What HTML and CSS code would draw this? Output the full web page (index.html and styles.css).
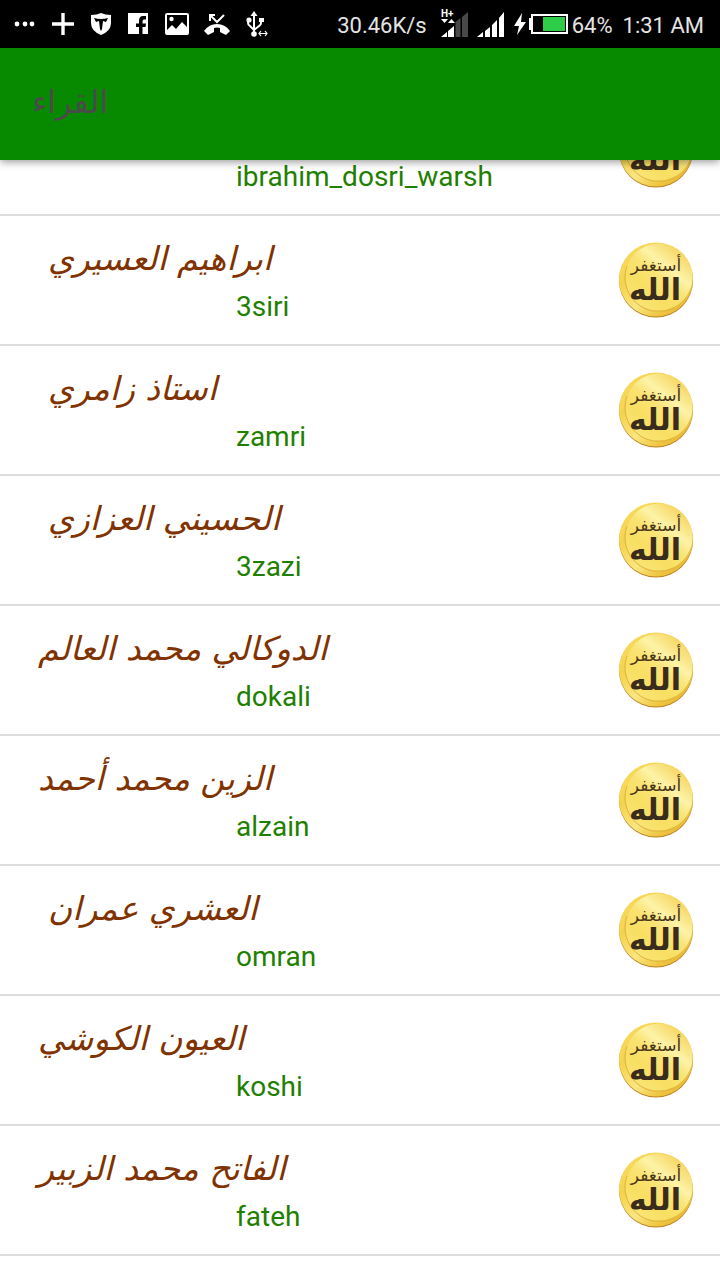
FILE: index.html
```html
<!DOCTYPE html>
<html lang="ar">
<head>
<meta charset="utf-8">
<meta name="viewport" content="width=device-width, initial-scale=1">
<title>القراء</title>
<link rel="stylesheet" href="styles.css">
</head>
<body>
<svg class="defs" width="0" height="0" aria-hidden="true">
  <defs>
    <linearGradient id="gold" x1="0" y1="0" x2="1" y2="1">
      <stop offset="0" stop-color="#f8df69"/>
      <stop offset=".3" stop-color="#f5d34c"/>
      <stop offset=".55" stop-color="#f9e680"/>
      <stop offset=".75" stop-color="#efc640"/>
      <stop offset="1" stop-color="#dda932"/>
    </linearGradient>
    <linearGradient id="face" x1=".1" y1="1" x2=".9" y2="0">
      <stop offset="0" stop-color="#fae87e"/>
      <stop offset=".3" stop-color="#f8df62"/>
      <stop offset=".5" stop-color="#fae374"/>
      <stop offset=".65" stop-color="#fdf3a8"/>
      <stop offset="1" stop-color="#f3c944"/>
    </linearGradient>
    <symbol id="coin" viewBox="0 0 76 76">
      <circle cx="38" cy="38.500" r="37" fill="#b98222"/>
      <circle cx="38" cy="37.500" r="37" fill="url(#gold)"/>
      <circle cx="41" cy="35" r="33.500" fill="url(#face)"/>
      <path d="M9 24a34 34 0 0 0 47 42" fill="none" stroke="#dfb440" stroke-width="1"/>
      <text class="coin-top" x="38" y="29" text-anchor="middle">أستغفر</text>
      <text class="coin-main" x="37" y="58" text-anchor="middle">الل&zwj;ه</text>
    </symbol>
  </defs>
</svg>
<div class="status">
  <div class="notices">
    <svg width="22" height="32" viewBox="0 0 22 32" fill="#fff"><circle cx="3" cy="16" r="2.400"/><circle cx="11" cy="16" r="2.400"/><circle cx="18" cy="16" r="2.400"/></svg>
    <svg width="24" height="32" viewBox="0 0 24 32"><path d="M12 5v22M1 16h22" stroke="#fff" stroke-width="3.400"/></svg>
    <svg width="22" height="32" viewBox="0 0 22 32"><path d="M1 7Q7 7 11 5q4 2 10 2v8q0 8-10 12Q1 23 1 15z" fill="#fff"/><path d="M4 10q7 2 14 0l-2 4-3-1-1 8-1 2-1-2-1-8-3 1z" fill="#000"/></svg>
    <svg width="22" height="32" viewBox="0 0 22 32"><path d="M1 5h20v21H1z" fill="#fff"/><path d="M12 26v-7H9v-3.500h3V13c0-3.500 1.500-5 4-5h3v3.500h-2q-1.500 0-1.500 2v2H19l-.5 3.500h-3v7z" fill="#000"/></svg>
    <svg width="26" height="32" viewBox="0 0 26 32"><rect x="2" y="6" width="22" height="20" rx="1" fill="none" stroke="#fff" stroke-width="2"/><path d="M3 22l5-5 4 4 6-7 6 6v6H3z" fill="#fff"/><circle cx="7.500" cy="11" r="2.200" fill="#fff"/></svg>
    <svg width="26" height="32" viewBox="2 0 26 32"><path d="M1 23q5-7 13-7t13 7l-4 4-6-3v-4q-3-1-6 0v4l-6 3z" fill="#fff"/><path d="M7 13V7h5M7 7l7 7 7-7" fill="none" stroke="#fff" stroke-width="2"/></svg>
    <svg width="24" height="32" viewBox="2 0 24 32"><path d="M10 26V6M4 11v4q0 2 2 3l4 4M17 12v3q0 2-2 3l-5 4" fill="none" stroke="#fff" stroke-width="2"/><path d="M6.500 8L10 3l3.500 5z" fill="#fff"/><circle cx="5" cy="12" r="2.600" fill="#fff"/><path d="M15 10h5v4h-5z" fill="#fff"/><circle cx="10" cy="26" r="2.800" fill="#fff"/><path d="M15 25.500h8M17 23l-2 2.500 2 2.500M21 23l2 2.500-2 2.500" fill="none" stroke="#fff" stroke-width="1.200"/></svg>
  </div>
  <div class="system">
    <span class="speed">30.46K/s</span>
    <svg class="signal" width="28" height="34" viewBox="0 0 28 34"><text class="net" x="0" y="8">H+</text><path d="M0 10h7l-3.500 4zM7 14l3.500-4 3.500 4z" fill="#fff"/><path d="M0 28l6-5v5zM7 22l6-5v11H7z" fill="#fff"/><path d="M14.500 13l5-4v19h-5zM21 8l6-5v25h-6z" fill="#484848"/></svg>
    <svg class="signal" width="28" height="34" viewBox="0 0 28 34" fill="#fff"><path d="M0 28l6-5v5zM8 22l5-4v10H8zM15 16l5-5v17h-5zM22 9l5-6v25h-5z"/></svg>
    <svg class="battery" width="56" height="32" viewBox="0 0 56 32"><path d="M9 3L1 16h5l-2 9 9-13H8z" fill="#fff"/><rect x="19" y="5" width="35" height="18" fill="none" stroke="#fff" stroke-width="2"/><path d="M18 8h-2v12h2z" fill="#fff"/><path d="M30 7h22v14H30z" fill="#2ecc48"/></svg>
    <span class="percent">64%</span>
    <span class="clock">1:31 AM</span>
  </div>
</div>
<header class="appbar"><h1 class="title" dir="rtl">القراء</h1></header>
<main class="viewport">
  <ul class="readers">
    <li class="reader"><div class="info"><span class="name"></span><span class="slug">ibrahim_dosri_warsh</span></div><svg class="coin"><use href="#coin"/></svg></li>
    <li class="reader"><div class="info"><span class="name spaced" dir="rtl">ابراهيم العسيري</span><span class="slug">3siri</span></div><svg class="coin"><use href="#coin"/></svg></li>
    <li class="reader"><div class="info"><span class="name spaced" dir="rtl">استاذ زامري</span><span class="slug">zamri</span></div><svg class="coin"><use href="#coin"/></svg></li>
    <li class="reader"><div class="info"><span class="name spaced" dir="rtl">الحسيني العزازي</span><span class="slug">3zazi</span></div><svg class="coin"><use href="#coin"/></svg></li>
    <li class="reader"><div class="info"><span class="name" dir="rtl">الدوكالي محمد العالم</span><span class="slug">dokali</span></div><svg class="coin"><use href="#coin"/></svg></li>
    <li class="reader"><div class="info"><span class="name" dir="rtl">الزين محمد أحمد</span><span class="slug">alzain</span></div><svg class="coin"><use href="#coin"/></svg></li>
    <li class="reader"><div class="info"><span class="name spaced" dir="rtl">العشري عمران</span><span class="slug">omran</span></div><svg class="coin"><use href="#coin"/></svg></li>
    <li class="reader"><div class="info"><span class="name" dir="rtl">العيون الكوشي</span><span class="slug">koshi</span></div><svg class="coin"><use href="#coin"/></svg></li>
    <li class="reader"><div class="info"><span class="name" dir="rtl">الفاتح محمد الزبير</span><span class="slug">fateh</span></div><svg class="coin"><use href="#coin"/></svg></li>
  </ul>
</main>
</body>
</html>
```

FILE: styles.css
```css
* { box-sizing: border-box; }
body {
  margin: 0;
  height: 100vh;
  overflow: hidden;
  display: flex;
  flex-direction: column;
  background: #fff;
  font-family: Roboto, "DejaVu Sans", sans-serif;
}
.defs { position: absolute; }
.status {
  flex: none;
  display: flex;
  justify-content: space-between;
  align-items: center;
  height: 48px;
  padding: 0 16px 0 14px;
  background: #000;
  color: #e4e4e4;
  font-size: 22px;
}
.notices { display: flex; gap: 15px; }
.notices svg { overflow: visible; }
.system { display: flex; align-items: center; padding-top: 3px; }
.speed { margin-right: 14px; }
.signal { margin-right: 8px; overflow: visible; }
.battery { margin-right: 3px; }
.percent { margin-right: 10px; }
.net {
  font: bold 10px Roboto, sans-serif;
  fill: #fff;
}
.appbar {
  flex: none;
  z-index: 1;
  display: flex;
  align-items: center;
  height: 112px;
  padding: 0 32px 4px;
  background: #088a00;
  box-shadow: 0 2px 8px rgba(0, 0, 0, 0.4);
}
.title {
  margin: 0;
  color: #4a4a4a;
  font: 400 32px/48px "DejaVu Sans", sans-serif;
}
.viewport { flex: 1; min-height: 0; }
.readers {
  margin: -74px 0 0;
  padding: 0;
  list-style: none;
}
.reader {
  display: flex;
  justify-content: space-between;
  align-items: center;
  height: 130px;
  padding: 0 26px 0 38px;
  border-bottom: 2px solid #dcdcdc;
}
.info {
  display: flex;
  flex-direction: column;
  align-items: flex-start;
}
.name {
  height: 54px;
  color: #803300;
  font: italic 33px/48px "DejaVu Sans", sans-serif;
  white-space: nowrap;
}
.spaced { padding-left: 10px; }
.slug {
  padding-left: 198px;
  color: #1f8000;
  font-size: 28px;
  line-height: 36px;
}
.coin { width: 76px; height: 76px; }
.coin-top {
  font: 17px "DejaVu Sans", sans-serif;
  fill: #49361a;
}
.coin-main {
  font: bold 30px "DejaVu Sans", sans-serif;
  fill: #3a2c1c;
}
```
